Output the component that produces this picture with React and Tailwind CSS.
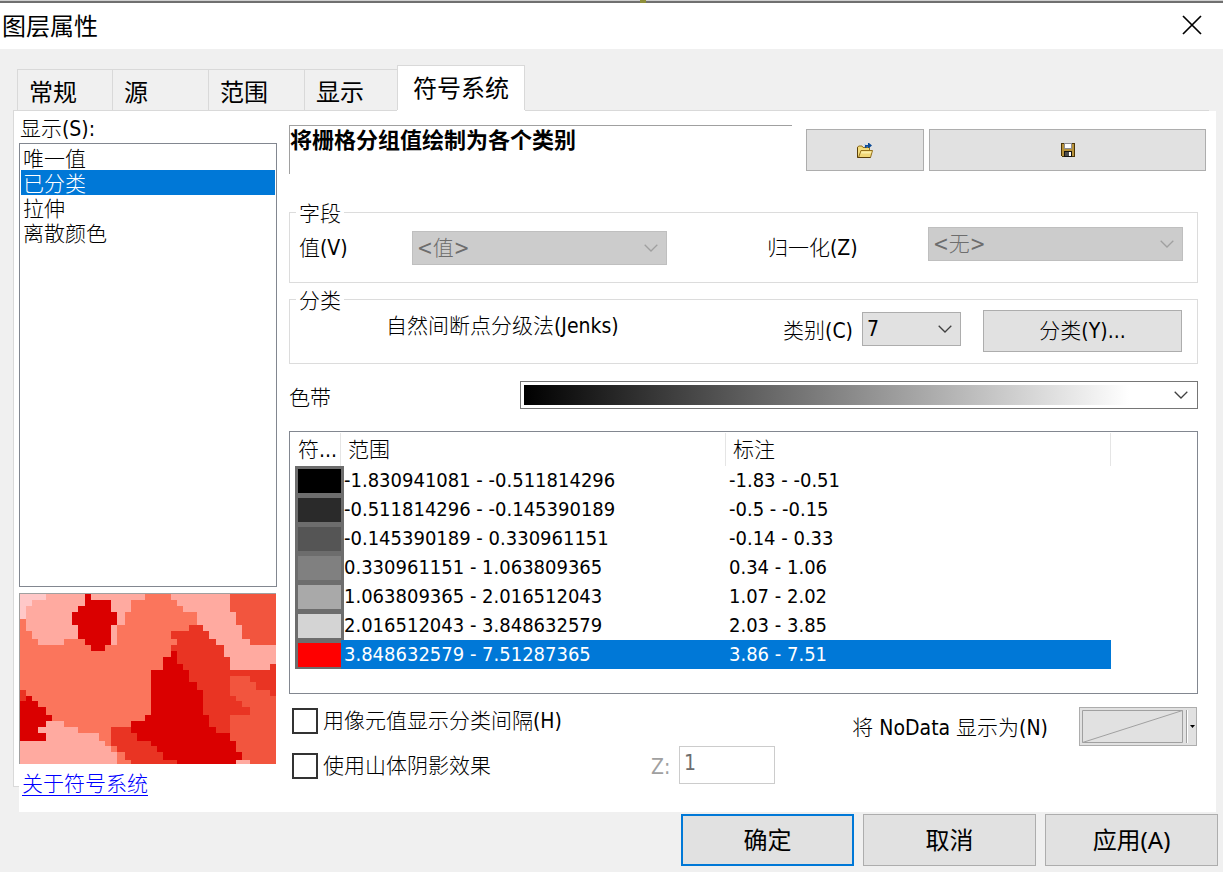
import { useState } from "react";

const UI = "font-['DejaVu_Sans_Condensed','Noto_Sans_CJK_SC',sans-serif]";
const SYSTEM = "font-['Noto_Sans','Noto_Sans_CJK_SC',sans-serif]";

const tabs = [
  { name: "常规", width: "w-[95px]" },
  { name: "源", width: "w-24" },
  { name: "范围", width: "w-24" },
  { name: "显示", width: "w-[93px]" },
];

const renderers = ["唯一值", "已分类", "拉伸", "离散颜色"];

const classes = [
  { color: "bg-black", range: "-1.830941081 - -0.511814296", label: "-1.83 - -0.51" },
  { color: "bg-[#2a2a2a]", range: "-0.511814296 - -0.145390189", label: "-0.5 - -0.15" },
  { color: "bg-[#555555]", range: "-0.145390189 - 0.330961151", label: "-0.14 - 0.33" },
  { color: "bg-[#808080]", range: "0.330961151 - 1.063809365", label: "0.34 - 1.06" },
  { color: "bg-[#a9a9a9]", range: "1.063809365 - 2.016512043", label: "1.07 - 2.02" },
  { color: "bg-[#d4d4d4]", range: "2.016512043 - 3.848632579", label: "2.03 - 3.85" },
  { color: "bg-[#ff0000]", range: "3.848632579 - 7.51287365", label: "3.86 - 7.51" },
];

const mapRegions = [
  ["#ffc8c8", "60,72 138,72 138,90 96,90 96,108 78,108 78,147 60,147"],
  ["#ffaaa0", "138,72 435,72 435,90 393,90 393,126 375,126 375,165 351,165 351,225 333,225 333,207 192,207 192,225 114,225 114,207 96,207 96,183 78,183 78,108 96,108 96,90 138,90"],
  ["#da0000", "255,72 273,72 273,90 333,90 333,126 351,126 351,165 333,165 333,225 315,225 315,243 273,243 273,225 255,225 255,207 234,207 234,165 216,165 216,126 234,126 234,108 255,108"],
  ["#ffaaa0", "513,72 690,72 690,126 708,126 708,165 726,165 726,207 750,207 750,225 828,225 828,282 810,282 810,300 690,300 690,261 672,261 672,225 648,225 648,207 627,207 627,183 609,183 609,165 591,165 591,126 549,126 549,108 531,108 531,90 513,90"],
  ["#f2553e", "690,72 828,72 828,225 750,225 750,207 726,207 726,165 708,165 708,126 690,126"],
  ["#e93423", "567,165 609,165 609,183 627,183 627,207 648,207 648,225 672,225 672,261 690,261 690,300 810,300 810,282 828,282 828,378 690,435 690,582 393,582 393,570 375,570 375,546 351,546 351,528 333,528 333,471 453,471 453,300 489,300 489,261 513,261 513,225 531,225 531,207 513,207 513,183 567,183"],
  ["#f2553e", "690,318 750,318 750,336 768,336 768,360 810,360 810,378 828,378 828,582 690,582 690,435 750,435 750,411 726,411 726,393 708,393 708,378 690,378"],
  ["#e93423", "690,378 708,378 708,393 726,393 726,411 750,411 750,435 690,435"],
  ["#da0000", "513,243 531,243 531,282 549,282 549,300 567,300 567,336 591,336 591,360 609,360 609,435 627,435 627,471 648,471 648,489 690,489 690,513 708,513 708,546 726,546 726,570 708,570 708,582 531,582 531,570 489,570 489,546 471,546 471,528 453,528 453,513 411,513 411,489 393,489 393,453 435,453 435,435 453,435 453,300 489,300 489,261 513,261"],
  ["#ffaaa0", "708,570 750,570 750,582 708,582"],
  ["#e93423", "60,360 78,360 78,393 60,393"],
  ["#da0000", "78,378 96,378 96,393 114,393 114,411 138,411 138,435 156,435 156,453 138,453 138,471 114,471 114,489 138,489 138,513 60,513 60,393 78,393"],
  ["#ffaaa0", "138,453 192,453 192,471 234,471 234,489 297,489 297,513 315,513 315,528 333,528 333,546 351,546 351,582 60,582 60,513 138,513 138,489 114,489 114,471 138,471"],
];

function Chevron({ className }) {
  return (
    <svg viewBox="0 0 14 8" className={`h-2 w-3.5 ${className}`} fill="none" stroke="currentColor" strokeWidth="1.3" aria-hidden="true">
      <path d="M.7 .8 7 7 13.3 .8" />
    </svg>
  );
}

function SelectBox({ id, options, disabled, className }) {
  return (
    <div className={`relative h-[34px] ${className}`}>
      <select
        id={id}
        disabled={disabled}
        className="h-full w-full appearance-none border border-[#adadad] bg-[#e1e1e1] pl-1 text-[21px] leading-7 text-black disabled:border-[#bfbfbf] disabled:bg-[#cccccc] disabled:text-[#6d6d6d] disabled:opacity-100"
      >
        {options.map((o) => (
          <option key={o}>{o}</option>
        ))}
      </select>
      <Chevron className={`pointer-events-none absolute top-[13px] right-[9px] ${disabled ? "text-[#a0a0a0]" : "text-[#404040]"}`} />
    </div>
  );
}

function Group({ title, className, children }) {
  return (
    <fieldset className={`mr-[18px] border border-[#dcdcdc] ${className}`}>
      <legend className="ml-1.5 h-[22px] px-[3px] leading-[26px]">{title}</legend>
      {children}
    </fieldset>
  );
}

function FolderIcon() {
  return (
    <svg viewBox="0 0 16 16" className="mt-0.5 h-4 w-4" aria-hidden="true">
      <path d="M.5 14.500V4L2 3h3l1 1.500h6.500V8" fill="#f3dc7c" stroke="#94701c" />
      <path d="M1.500 14.500 4 7.500h11.500L13.500 14.500Z" fill="#f2d878" stroke="#94701c" />
      <path d="M4.500 8.500h10l-.6 2H3.800Z" fill="#fbeea6" />
      <path d="M.5 4.500v10H13.500" fill="none" stroke="#5a3e08" />
      <path d="M8 5V2h3V0h1l3 2.500L12 5h-1V3.700H9.500V5Z" fill="#0b4a96" />
      <path d="M7 1h2v1H7zM7 3h1v1H7z" fill="#b5d4f0" />
    </svg>
  );
}

function DiskIcon() {
  return (
    <svg viewBox="0 0 14 14" className="h-3.5 w-3.5" shapeRendering="crispEdges" aria-hidden="true">
      <path d="M0 0h14v14H1L0 13Z" fill="#4a3508" />
      <path d="M1 1h12v12H1Z" fill="#b8923a" />
      <path d="M3 0h8v6H3Z" fill="#8c8c94" />
      <path d="M4 1h6v4H4Z" fill="#ffffff" />
      <path d="M3 8h8v6H3Z" fill="#141414" />
      <path d="M4 9h4v4H4Z" fill="#4c4c4c" />
      <path d="M8 9h2v4H8Z" fill="#ffffff" />
    </svg>
  );
}

function Check({ children }) {
  return (
    <label className="flex items-center gap-[5px] leading-[26px]">
      <input type="checkbox" className="size-[26px] shrink-0 appearance-none border-2 border-[#333333] bg-white checked:bg-[#333333]" />
      {children}
    </label>
  );
}

function Sidebar({ active, onSelect }) {
  return (
    <div className="flex w-[258px] shrink-0 flex-col">
      <div id="renderer-label" className="h-8 pl-px leading-9">显示(S):</div>
      <div role="listbox" aria-labelledby="renderer-label" className="flex h-[444px] flex-col border border-[#828790] p-px">
        {renderers.map((r) => (
          <button
            key={r}
            type="button"
            role="option"
            aria-selected={r === active}
            onClick={() => onSelect(r)}
            className={`h-[25px] pt-0.5 pl-0.5 text-left leading-[25px] ${r === active ? "bg-[#0078d7] text-white" : ""}`}
          >
            {r}
          </button>
        ))}
      </div>
      <div className="mt-1.5 mr-px border-t border-l border-[#a0a0a0]">
        <svg viewBox="60 72 768 510" className="block h-[170px] w-full bg-[#fb755c]" preserveAspectRatio="none" shapeRendering="crispEdges" role="img" aria-label="预览">
          {mapRegions.map(([fill, points]) => (
            <polygon key={points} fill={fill} points={points} />
          ))}
        </svg>
      </div>
      <a href="#about" className="mt-1 self-start pl-[3px] leading-8 text-[#0000ff] underline decoration-1 underline-offset-4">关于符号系统</a>
    </div>
  );
}

function ClassTable() {
  return (
    <div className="mt-[22px] mr-[18px] h-[263px] border border-[#828790] pt-px pr-[86px] pl-[5px]">
      <table className="w-full table-fixed border-separate border-spacing-0 text-left">
        <colgroup>
          <col className="w-[46px]" />
          <col />
          <col />
        </colgroup>
        <thead>
          <tr className="h-[33px]">
            <th className="border-r border-[#e5e5e5] p-0 pl-[3px] font-light whitespace-nowrap">符...</th>
            <th className="border-r border-[#e5e5e5] p-0 pl-[7px] font-light">范围</th>
            <th className="border-r border-[#e5e5e5] p-0 pl-[7px] font-light">标注</th>
          </tr>
        </thead>
        <tbody className="text-xl leading-[29px]">
          {classes.map((c, i) => {
            const selected = i === classes.length - 1 ? "bg-[#0078d7] text-white" : "";
            return (
              <tr key={c.range} className="h-[29px]">
                <td className="p-0">
                  <div className={`h-[29px] w-[49px] border-[3px] border-b-2 border-[#6d6d6d] ${c.color}`} />
                </td>
                <td className={`p-0 pl-[3px] whitespace-nowrap ${selected}`}>{c.range}</td>
                <td className={`p-0 pl-[3px] whitespace-nowrap ${selected}`}>{c.label}</td>
              </tr>
            );
          })}
        </tbody>
      </table>
    </div>
  );
}

function Symbology() {
  return (
    <div className="ml-3 flex min-w-0 flex-1 flex-col">
      <div className="mt-3.5 mr-2.5 flex">
        <h2 className="h-[49px] flex-1 border-t border-l border-[#a0a0a0] text-[22px] leading-[29px] font-bold">将栅格分组值绘制为各个类别</h2>
        <button type="button" aria-label="导入" className="mt-1 ml-3.5 flex h-[42px] w-[118px] items-center justify-center border border-[#adadad] bg-[#e1e1e1]">
          <FolderIcon />
        </button>
        <button type="button" aria-label="保存" className="mt-1 ml-[5px] flex h-[42px] w-[277px] items-center justify-center border border-[#adadad] bg-[#e1e1e1]">
          <DiskIcon />
        </button>
      </div>

      <Group title="字段" className="mt-[27px] h-[82px]">
        <div className="flex items-start pr-3.5 pl-[9px]">
          <label htmlFor="value" className="w-[113px] pt-2.5 leading-[30px]">值(V)</label>
          <SelectBox id="value" disabled options={["<值>"]} className="mt-2 flex-1" />
          <label htmlFor="norm" className="ml-[100px] w-[161px] pt-2.5 leading-[30px]">归一化(Z)</label>
          <SelectBox id="norm" disabled options={["<无>"]} className="mt-1 flex-1" />
        </div>
      </Group>

      <Group title="分类" className="mt-[5px] h-[76px]">
        <div className="flex items-start pr-[15px] pl-24">
          <span className="flex-1 leading-8">自然间断点分级法(Jenks)</span>
          <label htmlFor="count" className="mr-[9px] leading-[42px]">类别(C)</label>
          <SelectBox id="count" options={["7"]} className="mt-0.5 w-[99px]" />
          <button type="button" className="ml-[22px] h-[42px] w-[199px] border border-[#adadad] bg-[#e1e1e1]">分类(Y)...</button>
        </div>
      </Group>

      <div className="mt-[17px] mr-[18px] flex h-7">
        <span id="ramp-label" className="w-[231px] leading-[34px]">色带</span>
        <button type="button" aria-labelledby="ramp-label" className="flex flex-1 items-center border border-[#767676] bg-white pr-[9px] pl-[3px]">
          <span className="mr-[45px] h-5 flex-1 bg-linear-to-r/srgb from-black to-white" />
          <Chevron className="text-[#404040]" />
        </button>
      </div>

      <ClassTable />

      <div className="mt-[13px] mr-[19px] flex pl-[3px]">
        <div className="flex flex-1 flex-col gap-[19px] pt-px">
          <Check>用像元值显示分类间隔(H)</Check>
          <div className="flex">
            <div className="w-[359px]">
              <Check>使用山体阴影效果</Check>
            </div>
            <label htmlFor="z" className="w-7 leading-7 text-[#a0a0a0]">Z:</label>
            <input id="z" disabled defaultValue="1" className="-mt-[7px] h-[38px] w-24 border border-[#cccccc] bg-white pb-1 pl-1 text-[21px] text-[#6d6d6d]" />
          </div>
        </div>
        <span id="nodata" className="mr-[31px] leading-[42px]">将 NoData 显示为(N)</span>
        <button type="button" aria-labelledby="nodata" className="flex h-[39px] w-[118px] items-center border border-[#adadad] bg-[#e1e1e1] pl-0.5">
          <svg viewBox="0 0 101 33" className="h-[33px] w-[101px]" fill="none" stroke="#a0a0a0" aria-hidden="true">
            <path d="M.5 .5h100v32H.5Z" />
            <path d="M.5 32.500 100.500 .5" />
          </svg>
          <span className="ml-[3px] h-[33px] w-0.5 border-r border-l border-r-white border-l-[#a0a0a0]" />
          <svg viewBox="0 0 5 3" className="ml-0.5 h-[3px] w-[5px]" aria-hidden="true">
            <path d="M0 0h5L2.500 3Z" />
          </svg>
        </button>
      </div>
    </div>
  );
}

export default function App() {
  const [active, setActive] = useState("已分类");
  const footerButton = "h-[52px] w-[173px] bg-[#e1e1e1]";
  return (
    <div className={`flex min-h-screen flex-col bg-[#f0f0f0] text-2xl text-black ${SYSTEM}`}>
      <div className="flex h-[3px] justify-center border-t border-[#d0d0d0] bg-[#707070]">
        <span className="-mt-px ml-[63px] h-[3px] w-1.5 bg-[#8f8f3a]" />
      </div>
      <header className="flex h-[46px] items-center justify-between bg-white pr-[21px] pl-0.5">
        <h1>图层属性</h1>
        <button type="button" aria-label="关闭" className="mb-0.5">
          <svg viewBox="0 0 20 20" className="size-5" fill="none" stroke="currentColor" strokeWidth="1.7" aria-hidden="true">
            <path d="M1 1 19 19M19 1 1 19" />
          </svg>
        </button>
      </header>

      <div role="tablist" className="mt-4 flex items-end pl-[17px]">
        {tabs.map((t) => (
          <button key={t.name} type="button" role="tab" aria-selected="false" className={`h-[41px] border-t border-l border-[#d9d9d9] pt-1 pl-[11px] text-left ${t.width}`}>
            {t.name}
          </button>
        ))}
        <button type="button" role="tab" aria-selected="true" className="-mb-px h-[46px] w-32 border border-b-0 border-[#d9d9d9] bg-white pb-0.5">
          符号系统
        </button>
      </div>

      <div className="ml-[13px] flex flex-col">
        <div className="flex">
          <div className="h-px w-[384px] bg-[#d9d9d9]" />
          <div className="h-px w-32 bg-white" />
          <div className="mr-3.5 h-px flex-1 bg-[#d9d9d9]" />
        </div>
        <main className={`flex text-[21px] font-light ${UI}`}>
          <div className="h-[676px] w-1.5 border-b border-l border-[#d9d9d9] bg-white" />
          <div className="mr-[7px] flex min-h-[701px] min-w-0 flex-1 bg-white">
            <Sidebar active={active} onSelect={setActive} />
            <Symbology />
          </div>
        </main>
      </div>

      <footer className="mt-0.5 flex justify-end gap-[9px] pr-[5px]">
        <button type="button" className={`${footerButton} border-2 border-[#0078d7]`}>确定</button>
        <button type="button" className={`${footerButton} border border-[#adadad]`}>取消</button>
        <button type="button" className={`${footerButton} border border-[#adadad]`}>应用(A)</button>
      </footer>
    </div>
  );
}
